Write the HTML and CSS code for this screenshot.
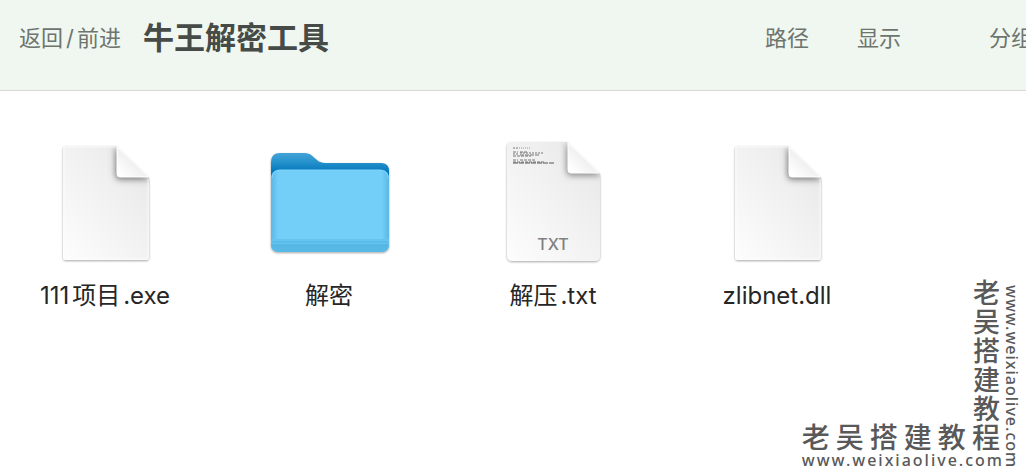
FILE: index.html
```html
<!DOCTYPE html>
<html lang="zh-CN">
  <head>
    <meta charset="utf-8" />
    <meta content="width=device-width, initial-scale=1" name="viewport" />
    <title>牛王解密工具</title>
    <link rel="stylesheet" href="styles.css">
  </head>
  <body>
    <header class="toolbar">
      <button class="tool" type="button">返回<span class="slash">/</span>前进</button>
      <h1 class="title">牛王解密工具</h1>
      <nav class="tools">
        <button class="tool" type="button">路径</button>
        <button class="tool" type="button">显示</button>
        <button class="tool group" type="button">分组</button>
      </nav>
    </header>

    <main class="files">
      <figure class="file">
        <svg class="icon" viewBox="0 0 128 128" aria-hidden="true">
          <defs>
            <linearGradient id="paper" x1="0" y1="1" x2="1" y2="0">
              <stop offset="0" stop-color="#fdfdfd"/>
              <stop offset="0.6" stop-color="#f0f0f0"/>
              <stop offset="1" stop-color="#e6e6e6"/>
            </linearGradient>
            <linearGradient id="fold" x1="0.1" y1="0.9" x2="0.6" y2="0.4">
              <stop offset="0" stop-color="#ffffff"/>
              <stop offset="1" stop-color="#ececec"/>
            </linearGradient>
            <filter id="drop" x="-10%" y="-10%" width="120%" height="120%">
              <feDropShadow dx="0" dy="1" stdDeviation="1" flood-color="#000" flood-opacity="0.35"/>
            </filter>
            <filter id="soft" x="-50%" y="-50%" width="200%" height="200%">
              <feGaussianBlur stdDeviation="3"/>
            </filter>
            <clipPath id="sheet">
              <path d="M25 8H75L108 40V119a3 3 0 0 1-3 3H25a3 3 0 0 1-3-3V11a3 3 0 0 1 3-3Z"/>
            </clipPath>
            <g id="document">
              <path d="M25 8H75L108 40V119a3 3 0 0 1-3 3H25a3 3 0 0 1-3-3V11a3 3 0 0 1 3-3Z" fill="url(#paper)" filter="url(#drop)"/>
              <g clip-path="url(#sheet)">
                <path d="M76 12V37a3 3 0 0 0 3 3H106Z" fill="#777" stroke="#777" stroke-width="3" filter="url(#soft)"/>
              </g>
              <path d="M25 9H75M107 41V119a2 2 0 0 1-2 2H25a2 2 0 0 1-2-2V11a2 2 0 0 1 2-2" fill="none" stroke="#fff" stroke-opacity="0.7"/>
              <path d="M76 9V36a3 3 0 0 0 3 3H107Z" fill="url(#fold)" stroke="#fff"/>
            </g>
          </defs>
          <use href="#document"/>
        </svg>
        <figcaption class="name">111项目.exe</figcaption>
      </figure>

      <figure class="file">
        <svg class="icon" viewBox="0 0 128 128" aria-hidden="true">
          <defs>
            <linearGradient id="back" x1="0" y1="15" x2="0" y2="34" gradientUnits="userSpaceOnUse">
              <stop offset="0" stop-color="#43a4d8"/>
              <stop offset="0.5" stop-color="#2590cb"/>
              <stop offset="1" stop-color="#0078bd"/>
            </linearGradient>
            <linearGradient id="edge" x1="0" y1="0" x2="1" y2="0">
              <stop offset="0" stop-color="#5ab8e6"/>
              <stop offset="0.06" stop-color="#73cef8"/>
              <stop offset="0.94" stop-color="#73cef8"/>
              <stop offset="1" stop-color="#5ab8e6"/>
            </linearGradient>
          </defs>
          <g filter="url(#drop)">
            <path d="M6 46V24q0-9 9-9H40c9 0 10 10 20 10H116q8 0 8 8V46Z" fill="url(#back)"/>
            <rect x="6" y="32" width="118" height="82" rx="8" fill="url(#edge)"/>
            <path d="M6 101H124V106q0 8-8 8H14q-8 0-8-8Z" fill="#65c3ef"/>
            <path d="M6 106H124q0 8-8 8H14q-8 0-8-8Z" fill="#58b8e6"/>
            <path d="M7 104H123M8 108H122" stroke="#55b4e3"/>
            <path d="M7 40q0-8 8-8H115q8 0 8 8" fill="none" stroke="#82d5fb"/>
          </g>
        </svg>
        <figcaption class="name">解密</figcaption>
      </figure>

      <figure class="file">
        <svg class="icon" viewBox="0 0 128 128" aria-hidden="true">
          <defs>
            <clipPath id="txt-sheet">
              <path d="M22 4H78L111 36V118a5 5 0 0 1-5 5H23a5 5 0 0 1-5-5V8a4 4 0 0 1 4-4Z"/>
            </clipPath>
          </defs>
          <path d="M22 4H78L111 36V118a5 5 0 0 1-5 5H23a5 5 0 0 1-5-5V8a4 4 0 0 1 4-4Z" fill="url(#paper)" filter="url(#drop)"/>
          <g clip-path="url(#txt-sheet)">
            <path d="M79 8V33a3 3 0 0 0 3 3H109Z" fill="#888" stroke="#888" stroke-width="3" filter="url(#soft)"/>
          </g>
          <path d="M79 5V32a3 3 0 0 0 3 3H110Z" fill="url(#fold)" stroke="#fff"/>
          <!-- preview of the file's first lines -->
          <g fill="none" stroke="#777">
            <path d="M24 10H29" stroke-dasharray="2 1"/>
            <path d="M30 10H41" stroke="#999" stroke-dasharray="1 1"/>
            <path d="M24 14H29M31 14H39" stroke-dasharray="3 1"/>
            <path d="M24 16H29M31 15H55" stroke-dasharray="2 1"/>
            <path d="M31 17H50" stroke-dasharray="4 1"/>
            <path d="M24 18H42M24 22H29M31 22H47M24 24H55" stroke-dasharray="3 1"/>
            <path d="M24 25H66" stroke="#555" stroke-dasharray="5 1"/>
          </g>
          <text class="kind" x="64" y="112">TXT</text>
        </svg>
        <figcaption class="name">解压.txt</figcaption>
      </figure>

      <figure class="file">
        <svg class="icon" viewBox="0 0 128 128" aria-hidden="true">
          <use href="#document"/>
        </svg>
        <figcaption class="name">zlibnet.dll</figcaption>
      </figure>
    </main>

    <aside class="watermark">
      <div class="brand">
        <div class="brand-side">
          <span>老</span><span>吴</span><span>搭</span><span>建</span><span>教</span>
        </div>
        <div class="brand-line">
          <span>老</span><span>吴</span><span>搭</span><span>建</span><span>教</span><span>程</span>
        </div>
        <div class="url">www.weixiaolive.com</div>
      </div>
      <div class="url url-side">www.weixiaolive.com</div>
    </aside>
  </body>
</html>
```

FILE: styles.css
```css
* {
  box-sizing: border-box;
}
html, body {
  height: 100%;
  margin: 0;
}
body {
  background-color: white;
  color: #262626;
  font-family: Inter, "Noto Sans CJK SC", sans-serif;
  overflow: hidden;
  position: relative;
}
.toolbar {
  align-items: center;
  background-color: #f0f7f0;
  border-bottom: 1px solid #d6dad6;
  display: flex;
  padding: 16px 0 30px 19px;
}
.tool {
  background: none;
  border: none;
  color: #6e746e;
  flex-shrink: 0;
  font-family: inherit;
  font-size: 22px;
  line-height: 44px;
  padding: 0;
}
.slash {
  margin: 0 3px;
}
.title {
  color: #464b47;
  flex-shrink: 0;
  font-size: 31px;
  font-weight: bold;
  line-height: 44px;
  margin: 0 0 0 22px;
}
.tools {
  display: flex;
  flex-shrink: 0;
  gap: 48px;
  margin-left: auto;
  margin-right: -7px;
}
.group {
  margin-left: 40px;
}
.files {
  display: grid;
  gap: 14px;
  grid-template-columns: repeat(auto-fill, 210px);
  padding-top: 47px;
}
.file {
  align-items: center;
  display: flex;
  flex-direction: column;
  gap: 12px;
  margin: 0;
}
.icon {
  height: 128px;
  width: 128px;
}
.kind {
  fill: #808080;
  font-size: 16px;
  font-weight: 500;
  text-anchor: middle;
}
.name {
  font-size: 24px;
  line-height: 36px;
  text-autospace: normal;
}
.watermark {
  align-items: flex-end;
  bottom: 8px;
  color: #595959;
  display: flex;
  font-weight: 500;
  position: absolute;
  right: 6px;
}
.brand {
  display: flex;
  flex-direction: column;
}
.brand-side, .brand-line {
  display: flex;
  font-size: 28px;
  line-height: 28px;
}
.brand-side {
  align-items: flex-end;
  flex-direction: column;
  font-size: 27px;
  line-height: 29px;
  padding-right: 4px;
}
.brand-line {
  gap: 6px;
}
.url {
  font-family: "Noto Sans", sans-serif;
  font-size: 16px;
  letter-spacing: 2px;
  line-height: 16px;
}
.url-side {
  letter-spacing: 1px;
  writing-mode: vertical-rl;
}
```
